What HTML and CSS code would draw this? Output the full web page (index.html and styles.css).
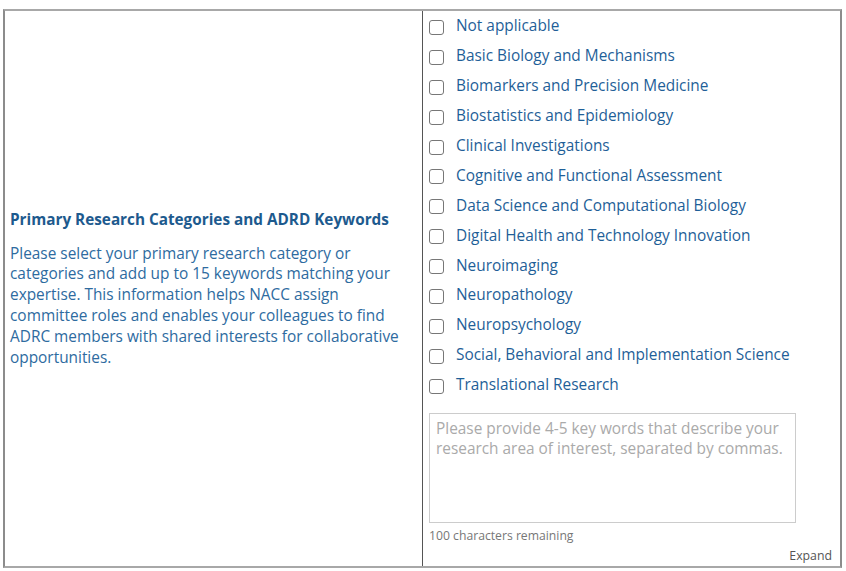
FILE: index.html
```html
<!DOCTYPE html>
<html lang="en">
<head>
    <meta charset="UTF-8">
    <title>Research Categories</title>
    <link rel="stylesheet" href="styles.css">
</head>
<body>
    <div class="field-row">
        <div class="field-label">
            <h3>Primary Research Categories and ADRD Keywords</h3>
            <p>Please select your primary research category or categories and add up to 15 keywords matching your expertise. This information helps NACC assign committee roles and enables your colleagues to find ADRC members with shared interests for collaborative opportunities.</p>
        </div>
        <div class="field-input">
            <ul class="choices">
                <li><label><input type="checkbox"><span class="box"></span>Not applicable</label></li>
                <li><label><input type="checkbox"><span class="box"></span>Basic Biology and Mechanisms</label></li>
                <li><label><input type="checkbox"><span class="box"></span>Biomarkers and Precision Medicine</label></li>
                <li><label><input type="checkbox"><span class="box"></span>Biostatistics and Epidemiology</label></li>
                <li><label><input type="checkbox"><span class="box"></span>Clinical Investigations</label></li>
                <li><label><input type="checkbox"><span class="box"></span>Cognitive and Functional Assessment</label></li>
                <li><label><input type="checkbox"><span class="box"></span>Data Science and Computational Biology</label></li>
                <li><label><input type="checkbox"><span class="box"></span>Digital Health and Technology Innovation</label></li>
                <li><label><input type="checkbox"><span class="box"></span>Neuroimaging</label></li>
                <li><label><input type="checkbox"><span class="box"></span>Neuropathology</label></li>
                <li><label><input type="checkbox"><span class="box"></span>Neuropsychology</label></li>
                <li><label><input type="checkbox"><span class="box"></span>Social, Behavioral and Implementation Science</label></li>
                <li><label><input type="checkbox"><span class="box"></span>Translational Research</label></li>
            </ul>
            <textarea class="keywords" placeholder="Please provide 4-5 key words that describe your research area of interest, separated by commas."></textarea>
            <div class="remaining">100 characters remaining</div>
            <div class="expand">Expand</div>
        </div>
    </div>
</body>
</html>
```

FILE: styles.css
```css
* {
    box-sizing: border-box;
}
body {
    margin: 0;
    padding: 9px 4px 0 3px;
    background-color: white;
    font-family: "Open Sans", Arial, sans-serif;
    font-size: 15.4px;
}
.field-row {
    display: flex;
    border-top: 2px solid #a8a8a8;
    border-bottom: 2px solid #a8a8a8;
    border-left: 2px solid #8c8c8c;
    border-right: 2px solid #8c8c8c;
    height: 559px;
}
.field-label {
    width: 418px;
    flex: none;
    display: flex;
    flex-direction: column;
    justify-content: center;
    padding: 0 6px 0 5px;
    border-right: 1px solid #555;
}
.field-label h3 {
    margin: 0 0 15px 0;
    font-size: 15.3px;
    font-weight: bold;
    color: #1d5a8e;
}
.field-label p {
    margin: 0;
    line-height: 20.8px;
    color: #2e6b9f;
}
.field-input {
    flex: 1;
    padding: 0 4px 0 6px;
}
.choices {
    list-style: none;
    margin: 0;
    padding: 0;
}
.choices li {
    height: 29.9px;
    display: flex;
    align-items: center;
}
.choices label {
    display: flex;
    align-items: center;
    color: #1f5f98;
    font-size: 15.4px;
}
.choices input {
    display: none;
}
.box {
    width: 15px;
    height: 15px;
    border: 1.5px solid #777;
    border-radius: 3px;
    margin-right: 12px;
    margin-top: 3px;
    background: white;
}
.keywords {
    display: block;
    width: 367px;
    height: 110px;
    margin-top: 13px;
    border: 1px solid #ccc;
    padding: 5px 6px;
    font-family: "Open Sans", Arial, sans-serif;
    font-size: 15.4px;
    line-height: 20.8px;
    resize: none;
}
.keywords::placeholder {
    color: #aaa;
}
.remaining {
    margin-top: 4px;
    font-size: 12.2px;
    color: #777;
}
.expand {
    text-align: right;
    margin-top: 3px;
    padding-right: 4px;
    font-size: 12.3px;
    color: #555;
}
```
